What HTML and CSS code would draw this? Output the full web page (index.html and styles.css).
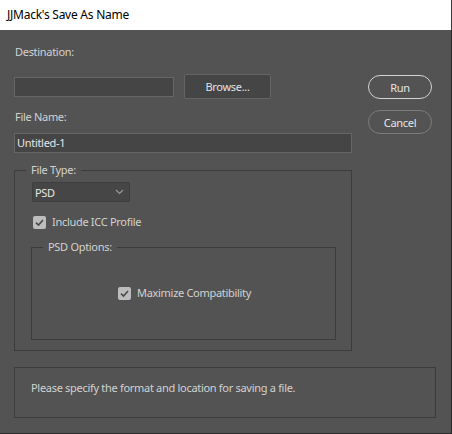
FILE: index.html
```html
<!DOCTYPE html>
<html>
<head>
<meta charset="utf-8">
<link rel="stylesheet" href="styles.css">
</head>
<body>
<div class="window">
  <div class="titlebar">JJMack's Save As Name</div>
  <div class="content">
    <div class="top">
      <div class="left">
        <div class="label first">Destination:</div>
        <div class="dest-row">
          <div class="input dest"></div>
          <div class="btn browse">Browse...</div>
        </div>
        <div class="label name-label">File Name:</div>
        <div class="input filename">Untitled-1</div>
        <fieldset class="group filetype">
          <legend>File Type:</legend>
          <div class="select">
            <span>PSD</span>
            <svg class="chev" width="9" height="6" viewBox="0 0 9 6"><path d="M1 1 L4.5 4.5 L8 1" fill="none" stroke="#9a9a9a" stroke-width="1.1"/></svg>
          </div>
          <div class="check-row icc">
            <span class="check"><svg width="13" height="13" viewBox="0 0 13 13"><path d="M3 6.6 L5.5 9 L10 4" fill="none" stroke="#4a4a4a" stroke-width="1.6"/></svg></span>
            <span>Include ICC Profile</span>
          </div>
          <fieldset class="group psd">
            <legend>PSD Options:</legend>
            <div class="check-row max">
              <span class="check"><svg width="13" height="13" viewBox="0 0 13 13"><path d="M3 6.6 L5.5 9 L10 4" fill="none" stroke="#4a4a4a" stroke-width="1.6"/></svg></span>
              <span>Maximize Compatibility</span>
            </div>
          </fieldset>
        </fieldset>
      </div>
      <div class="right">
        <div class="pill run">Run</div>
        <div class="pill cancel">Cancel</div>
      </div>
    </div>
    <div class="status">Please specify the format and location for saving a file.</div>
  </div>
</div>
</body>
</html>
```
FILE: styles.css
```css
html, body {
  margin: 0;
  padding: 0;
  background: #535353;
}
body {
  font-family: "Noto Sans", "DejaVu Sans", sans-serif;
  font-size: 11px;
  letter-spacing: -0.3px;
  color: #d2d2d2;
}
.window {
  width: 452px;
  height: 434px;
  box-sizing: border-box;
  display: flex;
  flex-direction: column;
}
.titlebar {
  height: 30px;
  flex: none;
  background: #ffffff;
  color: #000000;
  font-size: 12px;
  letter-spacing: -0.25px;
  line-height: 30px;
  padding-left: 7px;
  border-right: 1px solid #3a3a3a;
  box-sizing: border-box;
}
.content {
  flex: 1;
  background: #535353;
  border-right: 1px solid #2a2a2a;
  border-bottom: 1px solid #2a2a2a;
  padding-left: 14px;
}
.top {
  display: flex;
}
.left {
  width: 338px;
  display: flex;
  flex-direction: column;
}
.label {
  line-height: 16px;
  padding-left: 1px;
}
.label.first {
  margin-top: 14px;
}
.dest-row {
  display: flex;
  align-items: center;
  margin-top: 14px;
  gap: 10px;
}
.input {
  background: #454545;
  border: 1px solid #666666;
  box-sizing: border-box;
  color: #e6e6e6;
}
.dest {
  width: 160px;
  height: 20px;
}
.btn {
  background: #454545;
  border: 1px solid #646464;
  border-radius: 2px;
  box-sizing: border-box;
  color: #e2e2e2;
  display: flex;
  align-items: center;
  justify-content: center;
}
.browse {
  width: 87px;
  height: 25px;
}
.name-label {
  margin-top: 10px;
}
.filename {
  margin-top: 8px;
  width: 338px;
  height: 20px;
  line-height: 18px;
  padding-left: 2px;
}
.group {
  margin: 0;
  padding: 0;
  border: 1px solid #3c3c3c;
  min-width: 0;
}
.group legend {
  padding: 0 5px;
  line-height: 14px;
  color: #d2d2d2;
}
.filetype {
  margin-top: 10px;
  height: 188px;
  box-sizing: border-box;
  display: flex;
  flex-direction: column;
}
.filetype > legend {
  margin-left: 11px;
}
.select {
  margin: 5px 0 0 17px;
  width: 98px;
  height: 20px;
  box-sizing: border-box;
  background: #464646;
  border: 1px solid #3e3e3e;
  border-radius: 2px;
  display: flex;
  align-items: center;
  justify-content: space-between;
  padding: 0 5px 0 2px;
  color: #e6e6e6;
}
.chev {
  display: block;
}
.check-row {
  display: flex;
  align-items: center;
  gap: 6px;
  line-height: 16px;
}
.check {
  width: 13px;
  height: 13px;
  background: #bdbdbd;
  border-radius: 2px;
  display: block;
  flex: none;
}
.check svg {
  display: block;
}
.icc {
  margin: 12px 0 0 18px;
}
.psd {
  margin: 10px 0 0 16px;
  width: 305px;
  height: 100px;
  box-sizing: border-box;
  display: flex;
  flex-direction: column;
}
.psd > legend {
  margin-left: 11px;
}
.max {
  margin: 31px 0 0 86px;
}
.right {
  margin-left: 16px;
  margin-top: 45px;
  display: flex;
  flex-direction: column;
  gap: 11px;
}
.pill {
  width: 64px;
  height: 24px;
  box-sizing: border-box;
  border-radius: 12px;
  display: flex;
  align-items: center;
  justify-content: center;
  color: #e6e6e6;
}
.run {
  border: 1.5px solid #d4d4d4;
}
.cancel {
  border: 1px solid #7c7c7c;
}
.status {
  margin-top: 16px;
  width: 422px;
  height: 51px;
  box-sizing: border-box;
  border: 1px solid #3c3c3c;
  padding: 12px 0 0 16px;
  line-height: 16px;
}
```
